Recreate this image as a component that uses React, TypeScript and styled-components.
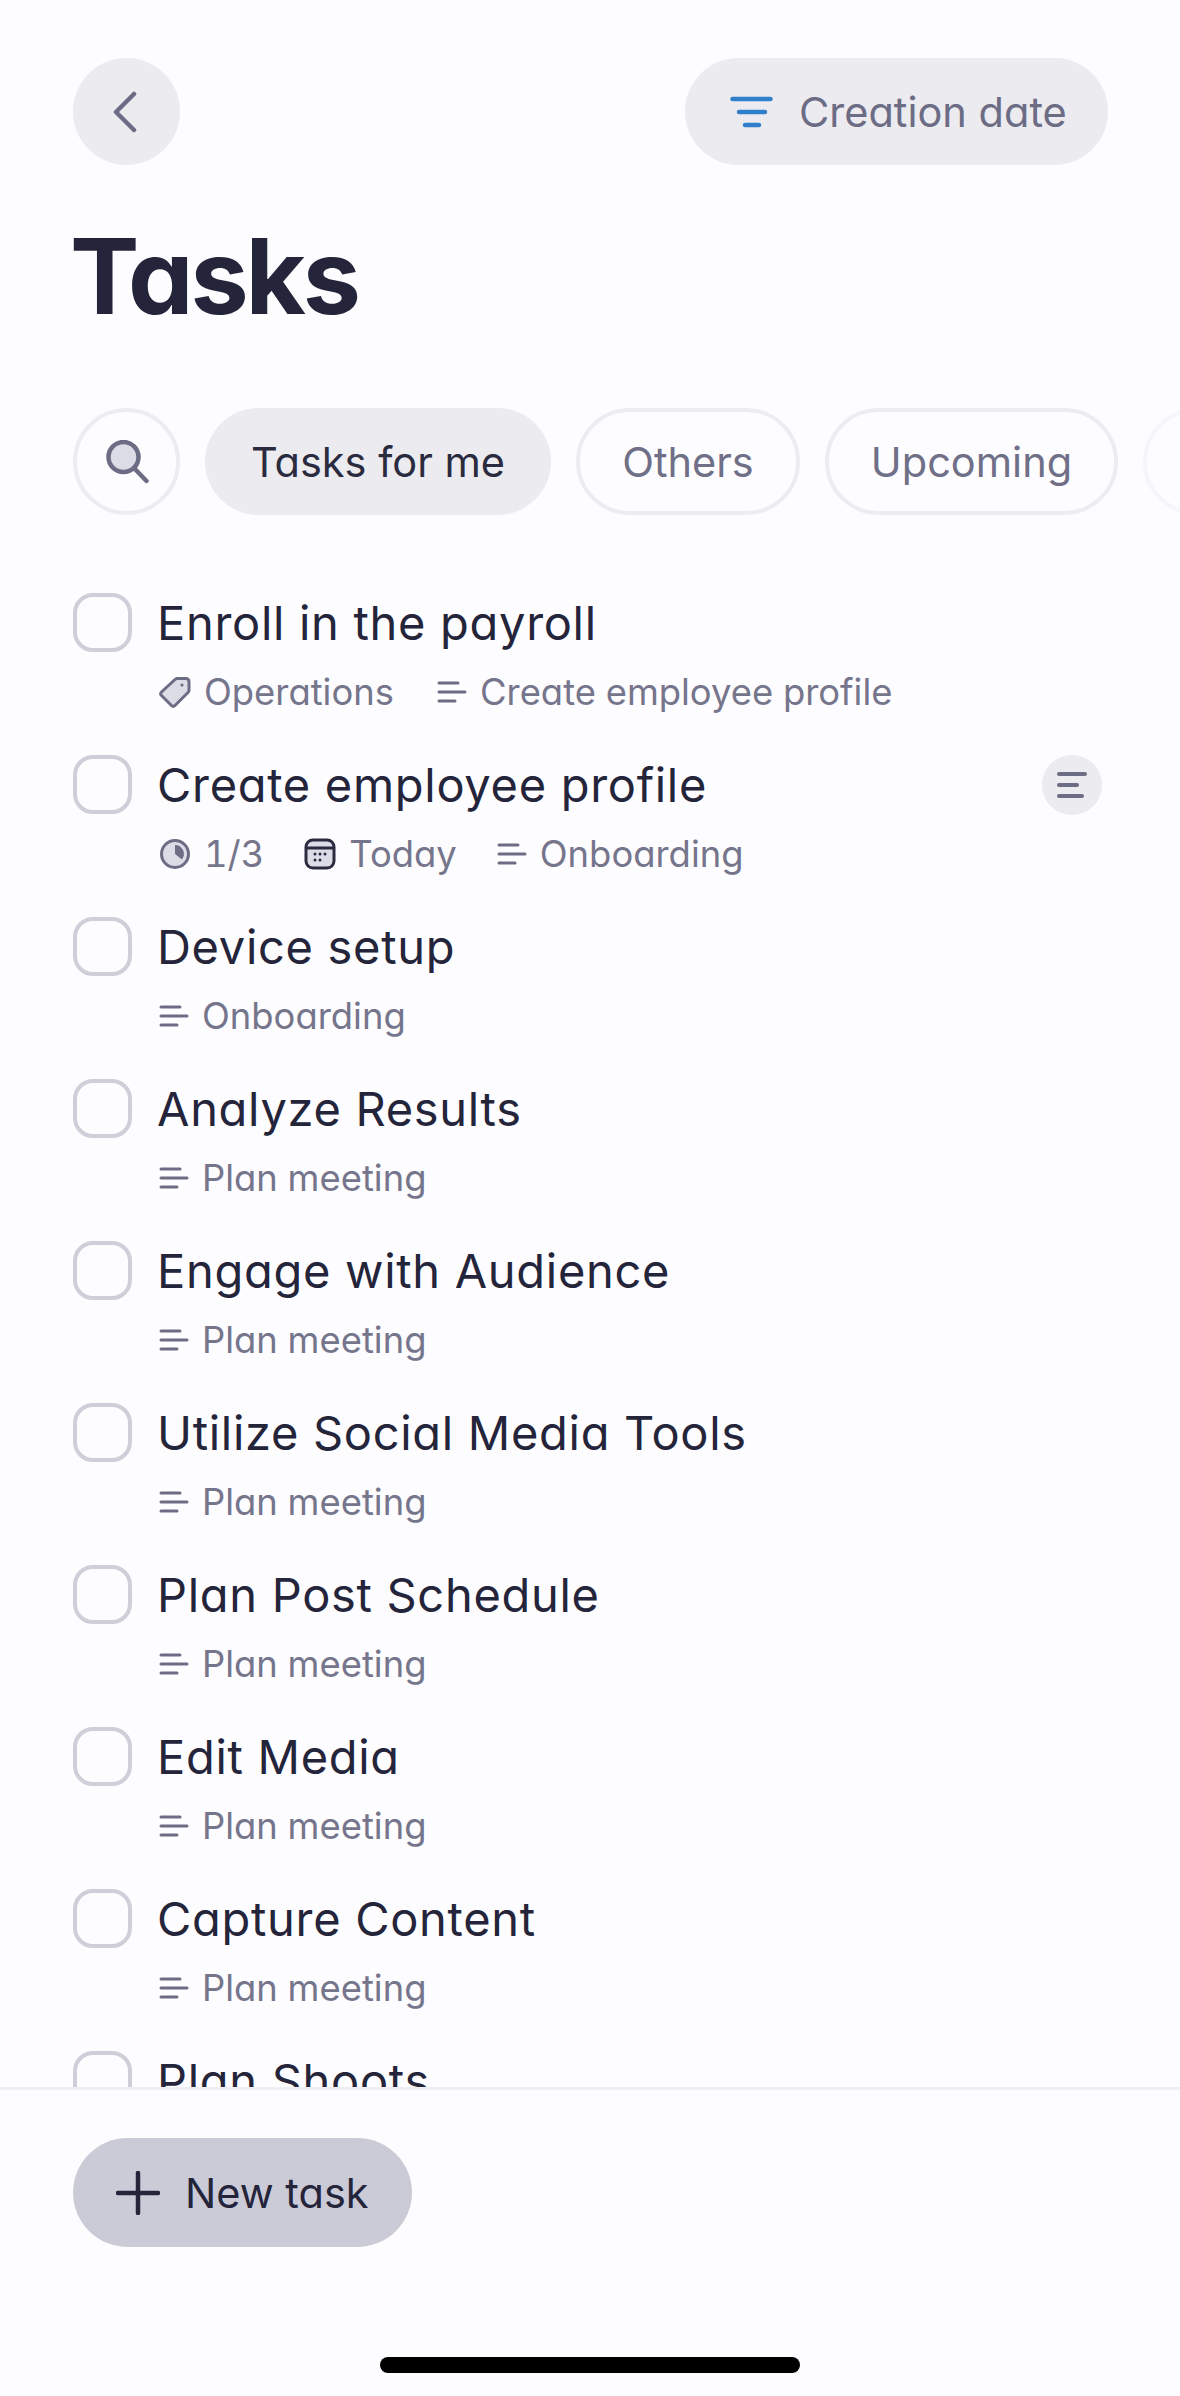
import React from "react";
import styled, { createGlobalStyle } from "styled-components";

const Global = createGlobalStyle`
  html, body { margin: 0; padding: 0; background: #fdfcfe; }
  * { box-sizing: border-box; }
  body { font-family: Inter, "Liberation Sans", sans-serif; font-feature-settings: "cv11" 1; }
`;

const Page = styled.div`
  width: 1180px;
  height: 2396px;
  background: #fdfcfe;
  display: flex;
  flex-direction: column;
  overflow: hidden;
`;
const Header = styled.header`
  display: flex;
  justify-content: space-between;
  padding: 58px 72px 0 73px;
`;
const RoundButton = styled.button`
  width: 107px;
  height: 107px;
  border: 0;
  padding: 0 4px 0 0;
  border-radius: 50%;
  background: #ebebf0;
  display: flex;
  align-items: center;
  justify-content: center;
`;
const SortPill = styled.button`
  width: 423px;
  height: 107px;
  border: 0;
  border-radius: 54px;
  background: #ebebf0;
  display: flex;
  align-items: center;
  gap: 26px;
  padding: 0 0 0 45px;
  font: inherit;
  font-size: 41.500px;
  color: #6c6c85;
`;
const Title = styled.h1`
  margin: 0;
  padding: 48px 0 0 70px;
  height: 243px;
  font-size: 104px;
  line-height: 126px;
  font-weight: 700;
  letter-spacing: -3.200px;
  color: #24243a;
`;
const Chips = styled.nav`
  display: flex;
  gap: 25px;
  padding-left: 73px;
  overflow: hidden;
  flex: none;
`;
const SearchChip = styled.button`
  flex: none;
  width: 107px;
  height: 107px;
  padding: 0;
  border-radius: 50%;
  border: 4px solid #ededf1;
  background: transparent;
  display: flex;
  align-items: center;
  justify-content: center;
`;
const Chip = styled.button<{ $active?: boolean; $w: number }>`
  flex: none;
  width: ${(p) => p.$w}px;
  height: 107px;
  padding: 0;
  border-radius: 54px;
  border: ${(p) => (p.$active ? "0" : "4px solid #ededf1")};
  background: ${(p) => (p.$active ? "#ebebf0" : "transparent")};
  color: ${(p) => (p.$active ? "#2b2b40" : "#6f6f88")};
  font: inherit;
  font-size: 41.500px;
`;
const GhostChip = styled.span`
  flex: none;
  width: 200px;
  height: 107px;
  border-radius: 54px;
  border: 4px solid #f6f6f9;
`;
const List = styled.ul`
  list-style: none;
  margin: 0;
  padding: 78px 78px 0 73px;
  flex: 1;
  min-height: 0;
  overflow: hidden;
`;
const Row = styled.li`
  height: 162px;
  display: grid;
  grid-template-columns: 59px 1fr 60px;
  column-gap: 25px;
  grid-template-rows: 60px auto;
`;
const Check = styled.span`
  width: 59px;
  height: 59px;
  border: 4.500px solid #cfcfd9;
  border-radius: 20px;
`;
const TaskName = styled.span`
  font-size: 47px;
  line-height: 60px;
  letter-spacing: 0.7px;
  color: #24243a;
  white-space: nowrap;
`;
const SideButton = styled.span`
  width: 60px;
  height: 60px;
  border-radius: 50%;
  background: #ebebf0;
  display: flex;
  align-items: center;
  justify-content: center;
`;
const Meta = styled.div<{ $tight?: boolean }>`
  grid-column: 2 / 4;
  display: flex;
  align-items: center;
  gap: ${(p) => (p.$tight ? 38 : 41)}px;
  margin-top: 19px;
  height: 40px;
`;
const MetaItem = styled.span`
  display: inline-flex;
  align-items: center;
  gap: 13px;
  padding-left: 2px;
  font-size: 36.400px;
  line-height: 40px;
  color: #75758c;
  white-space: nowrap;
  font-feature-settings: "cv11" 1, "tnum" 1;
`;
const Footer = styled.footer`
  flex: none;
  height: 309px;
  border-top: 3px solid #efeff3;
  padding: 48px 0 0 73px;
  display: flex;
  flex-direction: column;
`;
const NewTask = styled.button`
  width: 339px;
  height: 109px;
  border: 0;
  border-radius: 55px;
  background: #cbcbd7;
  display: flex;
  align-items: center;
  gap: 25px;
  padding: 0 0 0 43px;
  font: inherit;
  font-size: 41.500px;
  color: #24243a;
`;
const HomeBar = styled.div`
  width: 420px;
  height: 16px;
  margin: 110px 0 0 307px;
  border-radius: 8px;
  background: #000;
`;

const MUTED = "#6c6c85";
const FILL = "#dcdce6";

const Lines = () => (
  <svg width="30" height="30" viewBox="0 0 30 30" fill="none" stroke={MUTED} strokeWidth="3" strokeLinecap="round">
    <path d="M2 6h19M2 15h26M2 24h16" />
  </svg>
);
const Tag = () => (
  <svg width="32" height="32" viewBox="0 0 32 32" fill={FILL} stroke={MUTED} strokeWidth="3" strokeLinejoin="round">
    <path d="M18 2.500h9a3 3 0 0 1 3 3v9a3 3 0 0 1-1 2L16 29.500a2.500 2.500 0 0 1-3.500 0L2.500 19.500a2.500 2.500 0 0 1 0-3.500L16 3.500a3 3 0 0 1 2-1z" />
    <circle cx="23" cy="9" r="1.600" fill={MUTED} stroke="none" />
  </svg>
);
const Clock = () => (
  <svg width="32" height="32" viewBox="0 0 32 32" fill={FILL} stroke={MUTED} strokeWidth="3">
    <circle cx="16" cy="16" r="13.500" />
    <path d="M16 7a9 9 0 0 1 7 14.500L16 16z" fill={MUTED} stroke="none" />
  </svg>
);
const Calendar = () => (
  <svg width="32" height="32" viewBox="0 0 32 32" fill="none">
    <rect x="2" y="2" width="28" height="28" rx="7" fill={FILL} stroke="#2b2b40" strokeWidth="3" />
    <path d="M2 10h28" stroke="#2b2b40" strokeWidth="3" />
    <g fill="#2b2b40">
      <circle cx="11" cy="16" r="1.500" /><circle cx="16" cy="16" r="1.500" /><circle cx="21" cy="16" r="1.500" />
      <circle cx="11" cy="22" r="1.500" /><circle cx="16" cy="22" r="1.500" />
    </g>
  </svg>
);

type Item = { icon: React.ReactNode; text: string };
const plan: Item[] = [{ icon: <Lines />, text: "Plan meeting" }];
const onboarding: Item = { icon: <Lines />, text: "Onboarding" };
const tasks: { name: string; meta: Item[]; side?: boolean }[] = [
  { name: "Enroll in the payroll", meta: [{ icon: <Tag />, text: "Operations" }, { icon: <Lines />, text: "Create employee profile" }] },
  { name: "Create employee profile", side: true, meta: [{ icon: <Clock />, text: "1/3" }, { icon: <Calendar />, text: "Today" }, onboarding] },
  { name: "Device setup", meta: [onboarding] },
  { name: "Analyze Results", meta: plan },
  { name: "Engage with Audience", meta: plan },
  { name: "Utilize Social Media Tools", meta: plan },
  { name: "Plan Post Schedule", meta: plan },
  { name: "Edit Media", meta: plan },
  { name: "Capture Content", meta: plan },
  { name: "Plan Shoots", meta: plan },
];

export default function App() {
  return (
    <Page>
      <Global />
      <Header>
        <RoundButton aria-label="Back">
          <svg width="24" height="42" viewBox="0 0 24 42" fill="none" stroke={MUTED} strokeWidth="4.500" strokeLinecap="round" strokeLinejoin="round">
            <path d="M21 3 3 21l18 18" />
          </svg>
        </RoundButton>
        <SortPill>
          <svg width="43" height="34" viewBox="0 0 43 34" fill="none" stroke="#2f7fcb" strokeWidth="4.500" strokeLinecap="round">
            <path d="M2.500 4h38M9 17h26M15 30h14" />
          </svg>
          Creation date
        </SortPill>
      </Header>
      <Title>Tasks</Title>
      <Chips>
        <SearchChip aria-label="Search">
          <svg width="44" height="44" viewBox="0 0 44 44" fill="none" stroke={MUTED} strokeLinecap="round">
            <circle cx="18.500" cy="17" r="15" fill={FILL} strokeWidth="4.500" />
            <path d="M29 28l12.500 13" strokeWidth="4.500" />
          </svg>
        </SearchChip>
        <Chip $active $w={346}>Tasks for me</Chip>
        <Chip $w={224}>Others</Chip>
        <Chip $w={293}>Upcoming</Chip>
        <GhostChip />
      </Chips>
      <List>
        {tasks.map((t) => (
          <Row key={t.name}>
            <Check />
            <TaskName>{t.name}</TaskName>
            {t.side ? (
              <SideButton>
                <svg width="30" height="30" viewBox="0 0 30 30" fill="none" stroke={MUTED} strokeWidth="4" strokeLinecap="round">
                  <path d="M2 4h26M2 15h18M2 26h23" />
                </svg>
              </SideButton>
            ) : <span />}
            <Meta $tight={t.meta.length > 2}>
              {t.meta.map((m) => (
                <MetaItem key={m.text}>{m.icon}{m.text}</MetaItem>
              ))}
            </Meta>
          </Row>
        ))}
      </List>
      <Footer>
        <NewTask>
          <svg width="44" height="44" viewBox="0 0 44 44" fill="none" stroke="#24243a" strokeWidth="4.500" strokeLinecap="round">
            <path d="M22 2v40M2 22h40" />
          </svg>
          New task
        </NewTask>
        <HomeBar />
      </Footer>
    </Page>
  );
}
